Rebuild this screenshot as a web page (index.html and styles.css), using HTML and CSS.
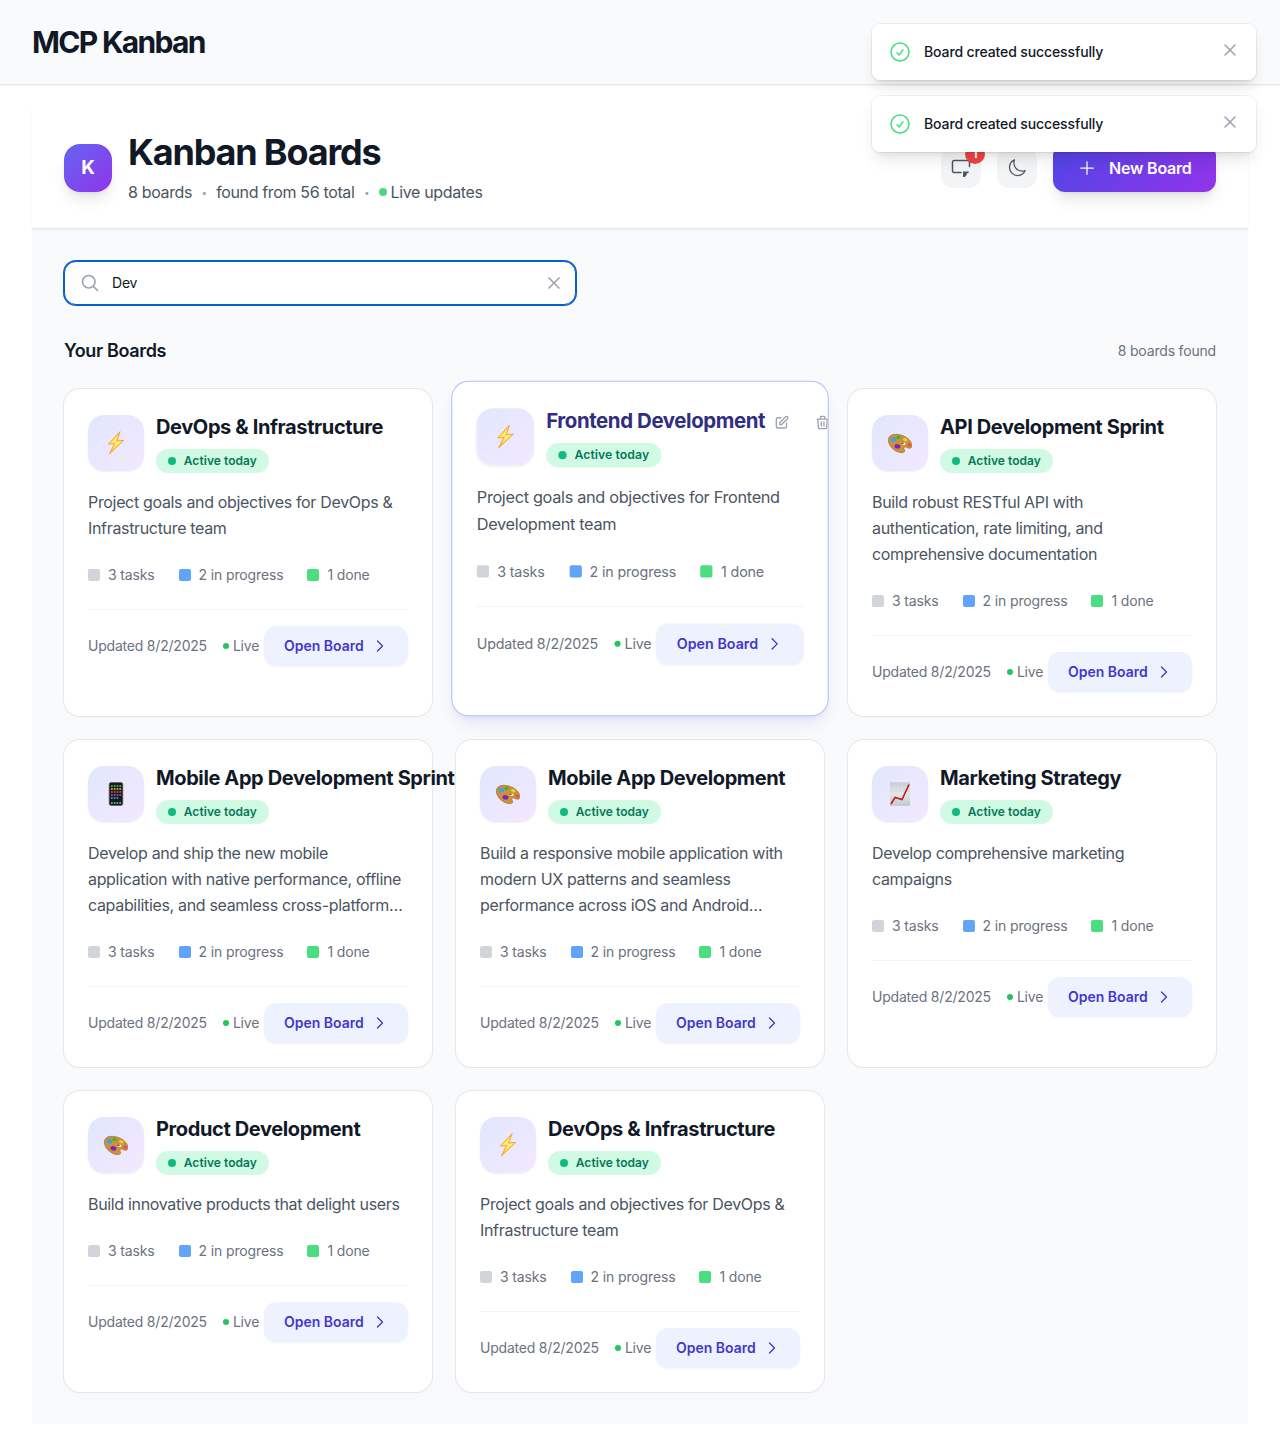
FILE: index.html
```html
<!DOCTYPE html>
<html lang="en">
<head>
<meta charset="utf-8">
<title>MCP Kanban</title>
<link rel="stylesheet" href="styles.css">
</head>
<body>
<svg class="sprite" aria-hidden="true">
  <defs>
    <linearGradient id="bolt-fill" x1="0" y1="0" x2="0" y2="1"><stop offset="0" stop-color="#ffb52e"/><stop offset=".5" stop-color="#ffe45c"/><stop offset="1" stop-color="#ffb52e"/></linearGradient>
    <linearGradient id="paper-fill" x1="0" y1="0" x2="0" y2="1"><stop offset="0" stop-color="#c3ccd1"/><stop offset=".5" stop-color="#e0e6e9"/><stop offset="1" stop-color="#bcc6cb"/></linearGradient>
  </defs>
  <symbol id="bolt" viewBox="0 0 24 24"><path d="M16.1.6 4.4 13.1l6.1-.5L5.3 23 19.8 9.4l-6.9.5z" fill="url(#bolt-fill)" stroke="#f5a32a" stroke-width=".9" stroke-linejoin="round"/><path d="m14.2 4-6.700 7.600 5-.5-3.500 6.700 7.600-7.100-5.500.4z" fill="#fff27d"/></symbol>
  <symbol id="palette" viewBox="0 0 24 24"><path d="M.4 8.300C.9 4.400 5 2.600 10.500 3.500c6.600 1 13.100 5.500 13.300 10.700.1 2.700-1.600 3.700-3.600 2.800-1.700-.8-3.600-1.700-4.300-.4-.6 1.200 1.500 2.400.6 4-.8 1.200-3.200 1.300-5.700.6C5.200 19.600-.2 13.700.4 8.300z" fill="#cd913c" stroke="#9a6424" stroke-width=".6"/><ellipse cx="15.800" cy="12.800" rx="1.700" ry="1.200" fill="#f5efff"/><ellipse cx="14.800" cy="12.200" rx=".9" ry=".8" fill="#5b3a17"/><ellipse cx="10.400" cy="6.400" rx="2.400" ry="1.700" fill="#43b52c"/><ellipse cx="5.400" cy="8.300" rx="2.700" ry="2.300" fill="#38a7df"/><ellipse cx="17.200" cy="8.700" rx="2.300" ry="1.500" fill="#e6d32d" transform="rotate(25 17.200 8.700)"/><ellipse cx="21.200" cy="14" rx="2" ry="1.500" fill="#f0503f" transform="rotate(30 21.200 14)"/><ellipse cx="9.400" cy="15.400" rx="3" ry="2.200" fill="#7b23bd" transform="rotate(12 9.400 15.400)"/></symbol>
  <symbol id="phone" viewBox="0 0 24 24"><rect x="5.200" y=".5" width="13.600" height="23" rx="2" fill="#1b1a1b" stroke="#5c5552" stroke-width=".7"/><g stroke-width="1.700" stroke-dasharray="1.700 1.100"><path d="M7 4h11" stroke="#4dcf64"/><path d="M7 7h11" stroke="#f2c64b"/><path d="M7 10h11" stroke="#df5745"/><path d="M7 13h11" stroke="#b852d8"/><path d="M7 16h8" stroke="#49a7ef"/><path d="M7 21h11" stroke="#58d5c4"/></g></symbol>
  <symbol id="chart" viewBox="0 0 24 24"><path d="M2 .3h20v23.500H2z" fill="url(#paper-fill)"/><path d="M6 .5v23M10 .5v23M14 .5v23M18 .5v23M2 6h20M2 11h20M2 16h20" stroke="#e9eef0" stroke-width=".3"/><path d="m3 22 4-6.500 7 2L21 2.500" fill="none" stroke="#c5161d" stroke-width="1.600"/></symbol>
  <symbol id="chevron" viewBox="0 0 24 24"><path d="m8.250 4.500 7.500 7.500-7.500 7.500"/></symbol>
  <symbol id="cross" viewBox="0 0 24 24"><path d="M6 18 18 6M6 6l12 12"/></symbol>
  <symbol id="check" viewBox="0 0 24 24"><path d="M9 12.750 11.250 15 15 9.750M21 12a9 9 0 1 1-18 0 9 9 0 0 1 18 0Z"/></symbol>
</svg>

<header class="topbar"><h1 class="brand">MCP Kanban</h1></header>

<div class="dashboard">
  <div class="hero">
    <div class="hero-left">
      <div class="logo">K</div>
      <div>
        <h2 class="hero-title">Kanban Boards</h2>
        <div class="hero-meta"><span>8 boards</span><span class="sep">•</span><span>found from 56 total</span><span class="sep">•</span><span class="live-updates"><i class="dot-live"></i>Live updates</span></div>
      </div>
    </div>
    <div class="hero-actions">
      <button class="icon-btn"><svg class="stroke i20" viewBox="0 0 20 20"><path d="M10 14.400H3A1.500 1.500 0 0 1 1.500 12.900V4A1.500 1.500 0 0 1 3 2.500H17A1.500 1.500 0 0 1 18.500 4V8.500"/><path d="M12 13.400h5.600v1.700l-1.900.3-.3 2.200-1.700 1.500H12z" fill="currentColor" stroke="none"/></svg><span class="count">1</span></button>
      <button class="icon-btn"><svg class="stroke i20" viewBox="0 0 24 24"><path d="M21.752 15.002A9.720 9.720 0 0 1 18 15.750c-5.385 0-9.750-4.365-9.750-9.750 0-1.330.266-2.597.748-3.752A9.753 9.753 0 0 0 3 11.250C3 16.635 7.365 21 12.750 21a9.753 9.753 0 0 0 9.002-5.998Z"/></svg></button>
      <button class="new-board"><svg class="stroke i20" viewBox="0 0 24 24"><path d="M12 4.500v15m7.500-7.500h-15"/></svg><span>New Board</span></button>
    </div>
  </div>

  <main class="content">
    <div class="search">
      <svg class="stroke i20" viewBox="0 0 24 24"><path d="m21 21-5.197-5.197m0 0A7.500 7.500 0 1 0 5.196 5.196a7.500 7.500 0 0 0 10.607 10.607Z"/></svg>
      <span class="query">Dev</span>
      <svg class="stroke i20"><use href="#cross"/></svg>
    </div>
    <div class="section-head"><h3>Your Boards</h3><span>8 boards found</span></div>

    <div class="grid">
      <article class="card">
        <div class="card-head"><div class="tile"><svg><use href="#bolt"/></svg></div><div><h4>DevOps &amp; Infrastructure</h4><span class="status"><i></i>Active today</span></div></div>
        <p class="desc">Project goals and objectives for DevOps &amp; Infrastructure team</p>
        <div class="stats"><span class="todo">3 tasks</span><span class="doing">2 in progress</span><span class="done">1 done</span></div>
        <div class="card-foot"><div class="updated"><span>Updated 8/2/2025</span><span class="live"><i></i>Live</span></div><button class="open"><span>Open Board</span><svg class="stroke"><use href="#chevron"/></svg></button></div>
      </article>

      <article class="card hovered">
        <div class="card-head"><div class="tile"><svg><use href="#bolt"/></svg></div><div><div class="title-row"><h4>Frontend Development</h4><svg class="tool" viewBox="0 0 24 24"><path d="M11 5H6a2 2 0 0 0-2 2v11a2 2 0 0 0 2 2h11a2 2 0 0 0 2-2v-5m-1.414-9.414a2 2 0 1 1 2.828 2.828L11.828 15H9v-2.828l8.586-8.586z"/></svg><svg class="tool" viewBox="0 0 24 24"><path d="m19 7-.867 12.142A2 2 0 0 1 16.138 21H7.862a2 2 0 0 1-1.995-1.858L5 7m5 4v6m4-6v6m1-10V4a1 1 0 0 0-1-1h-4a1 1 0 0 0-1 1v3M4 7h16"/></svg></div><span class="status"><i></i>Active today</span></div></div>
        <p class="desc">Project goals and objectives for Frontend Development team</p>
        <div class="stats"><span class="todo">3 tasks</span><span class="doing">2 in progress</span><span class="done">1 done</span></div>
        <div class="card-foot"><div class="updated"><span>Updated 8/2/2025</span><span class="live"><i></i>Live</span></div><button class="open"><span>Open Board</span><svg class="stroke"><use href="#chevron"/></svg></button></div>
      </article>

      <article class="card">
        <div class="card-head"><div class="tile"><svg><use href="#palette"/></svg></div><div><h4>API Development Sprint</h4><span class="status"><i></i>Active today</span></div></div>
        <p class="desc">Build robust RESTful API with authentication, rate limiting, and comprehensive documentation</p>
        <div class="stats"><span class="todo">3 tasks</span><span class="doing">2 in progress</span><span class="done">1 done</span></div>
        <div class="card-foot"><div class="updated"><span>Updated 8/2/2025</span><span class="live"><i></i>Live</span></div><button class="open"><span>Open Board</span><svg class="stroke"><use href="#chevron"/></svg></button></div>
      </article>

      <article class="card">
        <div class="card-head"><div class="tile"><svg><use href="#phone"/></svg></div><div><h4>Mobile App Development Sprint</h4><span class="status"><i></i>Active today</span></div></div>
        <p class="desc">Develop and ship the new mobile application with native performance, offline capabilities, and seamless cross-platform…</p>
        <div class="stats"><span class="todo">3 tasks</span><span class="doing">2 in progress</span><span class="done">1 done</span></div>
        <div class="card-foot"><div class="updated"><span>Updated 8/2/2025</span><span class="live"><i></i>Live</span></div><button class="open"><span>Open Board</span><svg class="stroke"><use href="#chevron"/></svg></button></div>
      </article>

      <article class="card">
        <div class="card-head"><div class="tile"><svg><use href="#palette"/></svg></div><div><h4>Mobile App Development</h4><span class="status"><i></i>Active today</span></div></div>
        <p class="desc">Build a responsive mobile application with modern UX patterns and seamless performance across iOS and Android…</p>
        <div class="stats"><span class="todo">3 tasks</span><span class="doing">2 in progress</span><span class="done">1 done</span></div>
        <div class="card-foot"><div class="updated"><span>Updated 8/2/2025</span><span class="live"><i></i>Live</span></div><button class="open"><span>Open Board</span><svg class="stroke"><use href="#chevron"/></svg></button></div>
      </article>

      <article class="card">
        <div class="card-head"><div class="tile"><svg><use href="#chart"/></svg></div><div><h4>Marketing Strategy</h4><span class="status"><i></i>Active today</span></div></div>
        <p class="desc">Develop comprehensive marketing campaigns</p>
        <div class="stats"><span class="todo">3 tasks</span><span class="doing">2 in progress</span><span class="done">1 done</span></div>
        <div class="card-foot"><div class="updated"><span>Updated 8/2/2025</span><span class="live"><i></i>Live</span></div><button class="open"><span>Open Board</span><svg class="stroke"><use href="#chevron"/></svg></button></div>
      </article>

      <article class="card">
        <div class="card-head"><div class="tile"><svg><use href="#palette"/></svg></div><div><h4>Product Development</h4><span class="status"><i></i>Active today</span></div></div>
        <p class="desc">Build innovative products that delight users</p>
        <div class="stats"><span class="todo">3 tasks</span><span class="doing">2 in progress</span><span class="done">1 done</span></div>
        <div class="card-foot"><div class="updated"><span>Updated 8/2/2025</span><span class="live"><i></i>Live</span></div><button class="open"><span>Open Board</span><svg class="stroke"><use href="#chevron"/></svg></button></div>
      </article>

      <article class="card">
        <div class="card-head"><div class="tile"><svg><use href="#bolt"/></svg></div><div><h4>DevOps &amp; Infrastructure</h4><span class="status"><i></i>Active today</span></div></div>
        <p class="desc">Project goals and objectives for DevOps &amp; Infrastructure team</p>
        <div class="stats"><span class="todo">3 tasks</span><span class="doing">2 in progress</span><span class="done">1 done</span></div>
        <div class="card-foot"><div class="updated"><span>Updated 8/2/2025</span><span class="live"><i></i>Live</span></div><button class="open"><span>Open Board</span><svg class="stroke"><use href="#chevron"/></svg></button></div>
      </article>
    </div>
  </main>
</div>

<div class="toasts">
  <div class="toast"><svg class="stroke toast-ok"><use href="#check"/></svg><span>Board created successfully</span><svg class="toast-close" viewBox="0 0 20 20"><path d="m5 5 10 10M15 5 5 15"/></svg></div>
  <div class="toast"><svg class="stroke toast-ok"><use href="#check"/></svg><span>Board created successfully</span><svg class="toast-close" viewBox="0 0 20 20"><path d="m5 5 10 10M15 5 5 15"/></svg></div>
</div>
</body>
</html>
```
FILE: styles.css
```css
* { box-sizing: border-box; margin: 0; padding: 0; }
body { background: #fff; color: #111827; font: 16px/24px Inter, "Liberation Sans", sans-serif; }
button { border: 0; font: inherit; }
svg { display: block; flex: none; }
.sprite { position: absolute; width: 0; height: 0; }
.stroke { fill: none; stroke: currentColor; stroke-width: 1.5; stroke-linecap: round; stroke-linejoin: round; }
.i20 { width: 20px; height: 20px; }

.topbar { height: 85px; padding: 24px 32px; background: #f9fafb; border-bottom: 1px solid #e5e7eb; box-shadow: 0 1px 2px rgba(0,0,0,.06); }
.brand { font-size: 30px; line-height: 37px; font-weight: 700; letter-spacing: -1.7px; }

.dashboard { margin: 23px 32px 24px; background: #f9fafb; }
.hero { position: relative; display: flex; justify-content: space-between; align-items: center; height: 121px; padding: 24px 32px; background: #fff; border-bottom: 1px solid #e5e7eb; box-shadow: 0 1px 2px rgba(0,0,0,.05); }
.hero-left { display: flex; align-items: center; gap: 16px; }
.logo { display: flex; align-items: center; justify-content: center; width: 48px; height: 48px; border-radius: 16px; background: linear-gradient(135deg, #6366f1, #9333ea); color: #fff; font-size: 19px; font-weight: 700; box-shadow: 0 10px 15px -3px rgba(0,0,0,.1), 0 4px 6px -4px rgba(0,0,0,.1); }
.hero-title { font-size: 36px; line-height: 40px; font-weight: 700; letter-spacing: -1.18px; }
.hero-meta { display: flex; align-items: center; margin-top: 8px; color: #4b5563; letter-spacing: -.35px; white-space: nowrap; }
.sep { width: 24px; text-align: center; font-size: 10px; color: #9ca3af; }
.live-updates { display: flex; align-items: center; gap: 4px; }
.dot-live { width: 8px; height: 8px; border-radius: 50%; background: #4fd580; }
.hero-actions { display: flex; align-items: center; gap: 16px; }
.icon-btn { position: relative; display: flex; align-items: center; justify-content: center; width: 40px; height: 40px; border-radius: 12px; background: #f3f4f6; color: #4b5563; }
.count { position: absolute; top: -4px; right: -4px; width: 20px; height: 20px; border-radius: 50%; background: #ef4444; color: #fff; font-size: 12px; line-height: 20px; font-weight: 700; text-align: center; }
.new-board { display: flex; align-items: center; gap: 12px; width: 163px; height: 48px; padding: 0 24px; border-radius: 12px; background: linear-gradient(135deg, #4f46e5, #9333ea); color: #fff; font-weight: 600; letter-spacing: -.2px; white-space: nowrap; box-shadow: 0 10px 15px -3px rgba(0,0,0,.1), 0 4px 6px -4px rgba(0,0,0,.1); }

.content { padding: 32px; }
.search { display: flex; align-items: center; width: 512px; height: 44px; padding: 0 11px 0 15px; border: 1px solid #0560cf; border-radius: 12px; background: #fff; box-shadow: 0 0 0 1px #0560cf; color: #9ca3af; }
.search svg { stroke-width: 2; }
.query { flex: 1; margin-left: 12px; color: #111827; font-size: 14px; letter-spacing: -.2px; }
.section-head { display: flex; align-items: center; justify-content: space-between; height: 28px; margin: 32px 0 24px; }
.section-head h3 { font-size: 18px; font-weight: 600; letter-spacing: -.35px; }
.section-head span { color: #6b7280; font-size: 14px; letter-spacing: -.18px; }

.grid { display: grid; grid-template-columns: repeat(3, 368px); gap: 24px; }
.card { padding: 24px; border-radius: 16px; background: #fff; box-shadow: 0 0 0 1px #e5e7eb, 0 1px 3px rgba(0,0,0,.04); }
.card.hovered { overflow: hidden; transform: translateY(-4px) scale(1.02); box-shadow: 0 0 0 1px #b4bdfb, 0 10px 15px -3px rgba(99,102,241,.14), 0 4px 6px -4px rgba(99,102,241,.12); }
.card-head { display: flex; align-items: center; gap: 12px; height: 60px; }
.tile { display: flex; flex: none; align-items: center; justify-content: center; width: 56px; height: 56px; border-radius: 16px; background: linear-gradient(135deg, #e0e7ff, #f3e8ff); box-shadow: 0 1px 2px rgba(0,0,0,.06); }
.tile svg { width: 24px; height: 24px; }
h4 { font-size: 20px; line-height: 28px; font-weight: 700; letter-spacing: -.38px; white-space: nowrap; }
.hovered h4 { color: #312e81; }
.title-row { display: flex; align-items: center; }
.tool { width: 16px; height: 16px; margin: 3px 0 0 8.500px; fill: none; stroke: #9ca3af; stroke-width: 2; stroke-linecap: round; stroke-linejoin: round; }
.tool + .tool { margin-left: 24px; }
.status { display: flex; align-items: center; gap: 8px; width: 113px; height: 24px; margin-top: 8px; padding: 0 12px; border-radius: 12px; background: #d1fae5; color: #047857; font-size: 12px; font-weight: 600; letter-spacing: .06px; white-space: nowrap; }
.status i { width: 8px; height: 8px; border-radius: 50%; background: #10b981; }
.desc { margin-top: 16px; color: #4b5563; line-height: 26px; letter-spacing: -.33px; }
.stats { display: flex; gap: 24px; height: 20px; margin: 24px 0; color: #6b7280; font-size: 14px; line-height: 20px; letter-spacing: -.14px; white-space: nowrap; }
.stats span { display: flex; align-items: center; gap: 8px; }
.stats span::before { content: ""; width: 12px; height: 12px; border-radius: 2px; background: #d1d5db; }
.stats .doing::before { background: #60a5fa; }
.stats .done::before { background: #4ade80; }
.card-foot { display: flex; align-items: center; justify-content: space-between; padding-top: 16px; border-top: 1px solid #f3f4f6; color: #6b7280; font-size: 14px; white-space: nowrap; }
.updated, .live { display: flex; align-items: center; }
.updated { gap: 16px; letter-spacing: -.21px; }
.live { gap: 4px; }
.live i { width: 6px; height: 6px; border-radius: 50%; background: #22c55e; }
.open { display: flex; align-items: center; gap: 8px; flex: none; width: 144px; height: 40px; padding: 0 20px; border-radius: 12px; background: #eef2ff; color: #4338ca; font-size: 14px; font-weight: 600; box-shadow: 0 1px 2px rgba(0,0,0,.05); }
.open svg { width: 16px; height: 16px; stroke-width: 2; }

.toasts { position: absolute; top: 24px; right: 24px; display: grid; gap: 16px; width: 384px; }
.toast { display: flex; align-items: center; height: 56px; padding: 0 16px; border-radius: 8px; background: #fff; box-shadow: 0 0 0 1px rgba(0,0,0,.05), 0 10px 15px -3px rgba(0,0,0,.1), 0 4px 6px -4px rgba(0,0,0,.1); font-size: 14px; font-weight: 500; letter-spacing: -.12px; }
.toast span { flex: 1; margin-left: 12px; }
.toast-ok { width: 24px; height: 24px; color: #4ade80; }
.toast-close { width: 20px; height: 20px; margin-top: -4px; fill: none; stroke: #9ca3af; stroke-width: 1.5; stroke-linecap: round; }
```
